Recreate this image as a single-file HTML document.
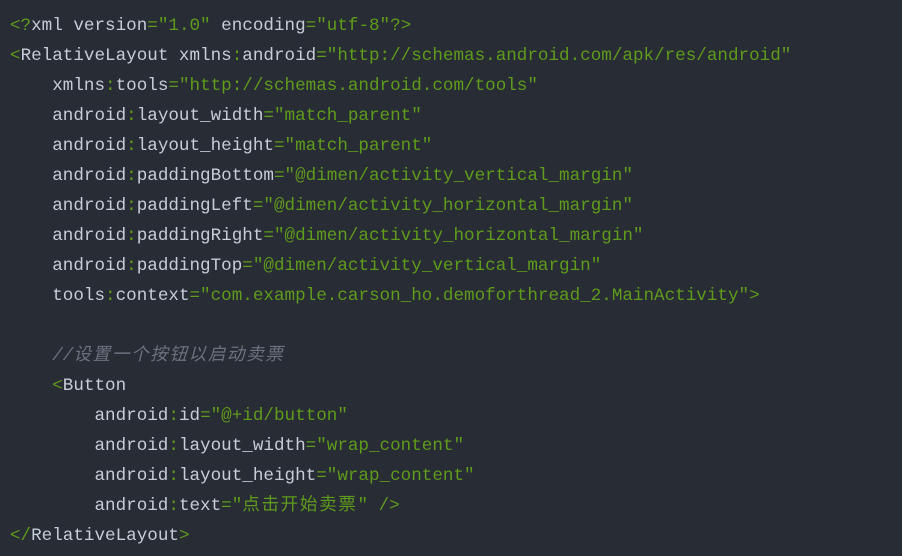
<!DOCTYPE html>
<html><head><meta charset="utf-8"><style>
html,body{margin:0;padding:0;background:#282c34;width:902px;height:556px;overflow:hidden}
pre{margin:0;padding:11px 0 0 10px;font-family:"Liberation Mono","Noto Sans CJK SC",monospace;font-size:17.6px;line-height:30px;color:#c5cdd8}
.g{color:#5f9b1c}.c{color:#6a7280;font-style:italic}
.k{letter-spacing:1.6px}
</style></head><body><pre><span class="g">&lt;?</span>xml version<span class="g">="1.0"</span> encoding<span class="g">="utf-8"?&gt;</span>
<span class="g">&lt;</span>RelativeLayout xmlns<span class="g">:</span>android<span class="g">="http://schemas.android.com/apk/res/android"</span>
    xmlns<span class="g">:</span>tools<span class="g">="http://schemas.android.com/tools"</span>
    android<span class="g">:</span>layout_width<span class="g">="match_parent"</span>
    android<span class="g">:</span>layout_height<span class="g">="match_parent"</span>
    android<span class="g">:</span>paddingBottom<span class="g">="@dimen/activity_vertical_margin"</span>
    android<span class="g">:</span>paddingLeft<span class="g">="@dimen/activity_horizontal_margin"</span>
    android<span class="g">:</span>paddingRight<span class="g">="@dimen/activity_horizontal_margin"</span>
    android<span class="g">:</span>paddingTop<span class="g">="@dimen/activity_vertical_margin"</span>
    tools<span class="g">:</span>context<span class="g">="com.example.carson_ho.demoforthread_2.MainActivity"&gt;</span>

    <span class="c">//<span class="k">设置一个按钮以启动卖票</span></span>
    <span class="g">&lt;</span>Button
        android<span class="g">:</span>id<span class="g">="@+id/button"</span>
        android<span class="g">:</span>layout_width<span class="g">="wrap_content"</span>
        android<span class="g">:</span>layout_height<span class="g">="wrap_content"</span>
        android<span class="g">:</span>text<span class="g">="<span class="k">点击开始卖票</span>" /&gt;</span>
<span class="g">&lt;/</span>RelativeLayout<span class="g">&gt;</span></pre></body></html>
